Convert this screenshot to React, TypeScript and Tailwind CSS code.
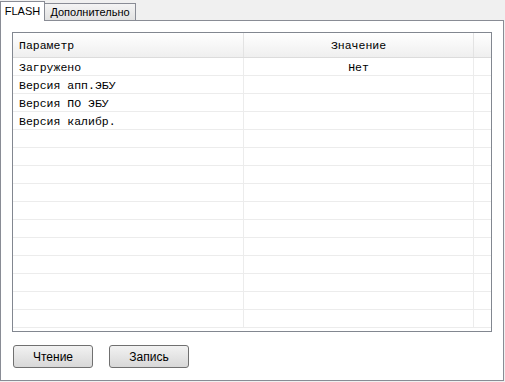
import React from "react";

const rows = [
  ["Загружено", "Нет"],
  ["Версия апп.ЭБУ", ""],
  ["Версия ПО ЭБУ", ""],
  ["Версия калибр.", ""],
  ["", ""],
  ["", ""],
  ["", ""],
  ["", ""],
  ["", ""],
  ["", ""],
  ["", ""],
  ["", ""],
  ["", ""],
  ["", ""],
  ["", ""],
];

export default function App() {
  return (
    <div
      className="w-[505px] h-[382px] bg-[#f0f0f0] flex flex-col text-[12px] text-black"
      style={{ fontFamily: "'Liberation Sans', Arial, sans-serif" }}
    >
      <div className="h-[20px] flex items-end relative z-10 text-[11px]">
        <div className="w-[45px] h-[20px] bg-white border-l border-t border-r border-[#898c95] flex items-center justify-center -mb-px pb-[1px]">
          FLASH
        </div>
        <div className="w-[91px] h-[17px] bg-gradient-to-b from-[#f4f4f4] to-[#e2e2e2] border-t border-r border-[#898c95] flex items-center justify-center">
          Дополнительно
        </div>
      </div>
      <div className="flex-1 mr-[1px] mb-[1px] bg-white border border-[#898c95] flex flex-col pl-[11px] pt-[11px]">
        <div
          className="w-[480px] h-[300px] border border-[#828790] flex flex-col overflow-hidden"
          style={{ fontFamily: "'Liberation Mono', 'Courier New', monospace", fontSize: "11.5px" }}
        >
          <div className="h-[25px] flex bg-gradient-to-b from-[#ffffff] to-[#efefef] border-b border-[#dcdcdc] shrink-0">
            <div className="w-[231px] border-r border-[#e3e3e3] flex items-center pl-[6px] pt-[2px]">Параметр</div>
            <div className="w-[230px] border-r border-[#e3e3e3] flex items-center justify-center pt-[2px]">Значение</div>
            <div className="flex-1" />
          </div>
          {rows.map((r, i) => (
            <div key={i} className="h-[18px] flex border-b border-[#ececec] shrink-0">
              <div className="w-[231px] border-r border-[#ececec] flex items-center pl-[6px] pt-[2px]">{r[0]}</div>
              <div className="w-[230px] border-r border-[#ececec] flex items-center justify-center pt-[2px]">{r[1]}</div>
              <div className="flex-1" />
            </div>
          ))}
        </div>
        <div className="flex gap-[16px] mt-[13px] ml-[1px]">
          <button className="w-[80px] h-[23px] rounded-[3px] border border-[#707070] bg-gradient-to-b from-[#f2f2f2] to-[#d8d8d8]">
            Чтение
          </button>
          <button className="w-[80px] h-[23px] rounded-[3px] border border-[#707070] bg-gradient-to-b from-[#f2f2f2] to-[#d8d8d8]">
            Запись
          </button>
        </div>
      </div>
    </div>
  );
}
